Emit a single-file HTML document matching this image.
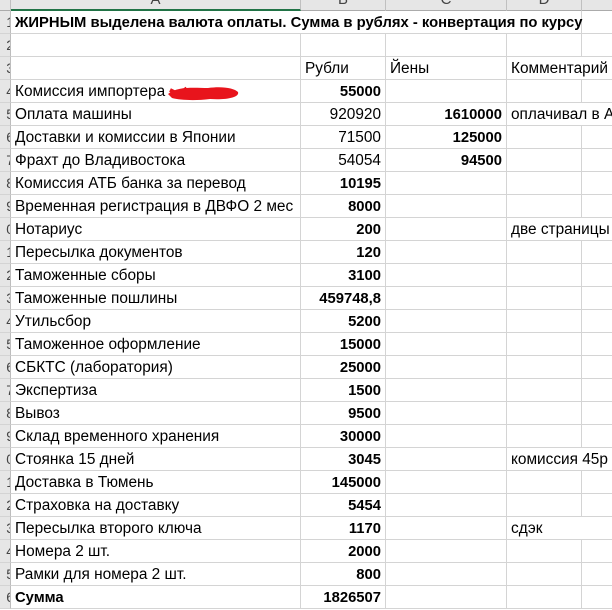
<!DOCTYPE html>
<html><head><meta charset="utf-8"><style>
*{box-sizing:border-box;margin:0;padding:0}
body{width:612px;height:607px;overflow:hidden;background:#fff;font-family:"Liberation Sans","Noto Sans CJK SC",sans-serif;font-size:15.4px;color:#000;position:relative}
.hdr{position:absolute;top:0;left:0;width:612px;height:11px;background:#e6e6e6;border-bottom:1px solid #ababab}
.hdr div{position:absolute;top:0;height:11px;border-right:1px solid #c0c0c0;text-align:center;font-size:15px;line-height:0px;color:#444;overflow:hidden}
.row{position:absolute;left:0;height:23px;display:grid;grid-template-columns:11px 290px 85px 121px 75px 40px;width:622px}
.row>div{border-right:1px solid #d4d4d4;border-bottom:1px solid #d4d4d4;height:23px;line-height:23px;white-space:nowrap;overflow:visible;padding:0 4px;position:relative}
.row>div:first-child{background:#e6e6e6;border-right:1px solid #bdbdbd;overflow:hidden;padding:0;color:#444;font-size:14px}
.row>div:first-child span{position:absolute;right:-4px;top:0}
.r{text-align:right}
.b{font-weight:bold;font-size:14.8px;line-height:24px!important}
.span2{grid-column:span 2}
.span4{grid-column:span 4}
</style></head><body>
<div class="hdr">
<div style="left:0;width:11px"></div>
<div style="left:11px;width:290px;border-bottom:2px solid #217346;height:11px">A</div>
<div style="left:301px;width:85px">B</div>
<div style="left:386px;width:121px">C</div>
<div style="left:507px;width:75px">D</div>
</div>

<div class="row" style="top:11px"><div><span>1</span></div><div class="span4 b" style="padding-left:4px">ЖИРНЫМ выделена валюта оплаты. Сумма в рублях - конвертация по курсу</div><div></div></div>
<div class="row" style="top:34px"><div><span>2</span></div><div></div><div></div><div></div><div></div><div></div></div>
<div class="row" style="top:57px"><div><span>3</span></div><div></div><div>Рубли</div><div>Йены</div><div class="span2">Комментарий</div></div>
<div class="row" style="top:80px"><div><span>4</span></div><div>Комиссия импортера</div><div class="r b">55000</div><div></div><div></div><div></div></div>
<div class="row" style="top:103px"><div><span>5</span></div><div>Оплата машины</div><div class="r">920920</div><div class="r b">1610000</div><div class="span2">оплачивал в АТБ</div></div>
<div class="row" style="top:126px"><div><span>6</span></div><div>Доставки и комиссии в Японии</div><div class="r">71500</div><div class="r b">125000</div><div></div><div></div></div>
<div class="row" style="top:149px"><div><span>7</span></div><div>Фрахт до Владивостока</div><div class="r">54054</div><div class="r b">94500</div><div></div><div></div></div>
<div class="row" style="top:172px"><div><span>8</span></div><div>Комиссия АТБ банка за перевод</div><div class="r b">10195</div><div></div><div></div><div></div></div>
<div class="row" style="top:195px"><div><span>9</span></div><div>Временная регистрация в ДВФО 2 мес</div><div class="r b">8000</div><div></div><div></div><div></div></div>
<div class="row" style="top:218px"><div><span>0</span></div><div>Нотариус</div><div class="r b">200</div><div></div><div class="span2">две страницы</div></div>
<div class="row" style="top:241px"><div><span>1</span></div><div>Пересылка документов</div><div class="r b">120</div><div></div><div></div><div></div></div>
<div class="row" style="top:264px"><div><span>2</span></div><div>Таможенные сборы</div><div class="r b">3100</div><div></div><div></div><div></div></div>
<div class="row" style="top:287px"><div><span>3</span></div><div>Таможенные пошлины</div><div class="r b">459748,8</div><div></div><div></div><div></div></div>
<div class="row" style="top:310px"><div><span>4</span></div><div>Утильсбор</div><div class="r b">5200</div><div></div><div></div><div></div></div>
<div class="row" style="top:333px"><div><span>5</span></div><div>Таможенное оформление</div><div class="r b">15000</div><div></div><div></div><div></div></div>
<div class="row" style="top:356px"><div><span>6</span></div><div>СБКТС (лаборатория)</div><div class="r b">25000</div><div></div><div></div><div></div></div>
<div class="row" style="top:379px"><div><span>7</span></div><div>Экспертиза</div><div class="r b">1500</div><div></div><div></div><div></div></div>
<div class="row" style="top:402px"><div><span>8</span></div><div>Вывоз</div><div class="r b">9500</div><div></div><div></div><div></div></div>
<div class="row" style="top:425px"><div><span>9</span></div><div>Склад временного хранения</div><div class="r b">30000</div><div></div><div></div><div></div></div>
<div class="row" style="top:448px"><div><span>0</span></div><div>Стоянка 15 дней</div><div class="r b">3045</div><div></div><div class="span2">комиссия 45р</div></div>
<div class="row" style="top:471px"><div><span>1</span></div><div>Доставка в Тюмень</div><div class="r b">145000</div><div></div><div></div><div></div></div>
<div class="row" style="top:494px"><div><span>2</span></div><div>Страховка на доставку</div><div class="r b">5454</div><div></div><div></div><div></div></div>
<div class="row" style="top:517px"><div><span>3</span></div><div>Пересылка второго ключа</div><div class="r b">1170</div><div></div><div class="span2">сдэк</div></div>
<div class="row" style="top:540px"><div><span>4</span></div><div>Номера 2 шт.</div><div class="r b">2000</div><div></div><div></div><div></div></div>
<div class="row" style="top:563px"><div><span>5</span></div><div>Рамки для номера 2 шт.</div><div class="r b">800</div><div></div><div></div><div></div></div>
<div class="row" style="top:586px"><div><span>6</span></div><div class="b">Сумма</div><div class="r b">1826507</div><div></div><div></div><div></div></div>

<svg style="position:absolute;left:164px;top:82px" width="80" height="22" viewBox="0 0 80 22">
<path d="M4 12 C14 4,30 6,44 6 C58 4,70 6,74 10 C76 16,60 18,46 17 C30 19,16 18,8 16 Z" fill="#e8141c"/>
<path d="M6 8 L14 12 M20 6 L26 14" stroke="#e8141c" stroke-width="4"/>
</svg>
</body></html>
